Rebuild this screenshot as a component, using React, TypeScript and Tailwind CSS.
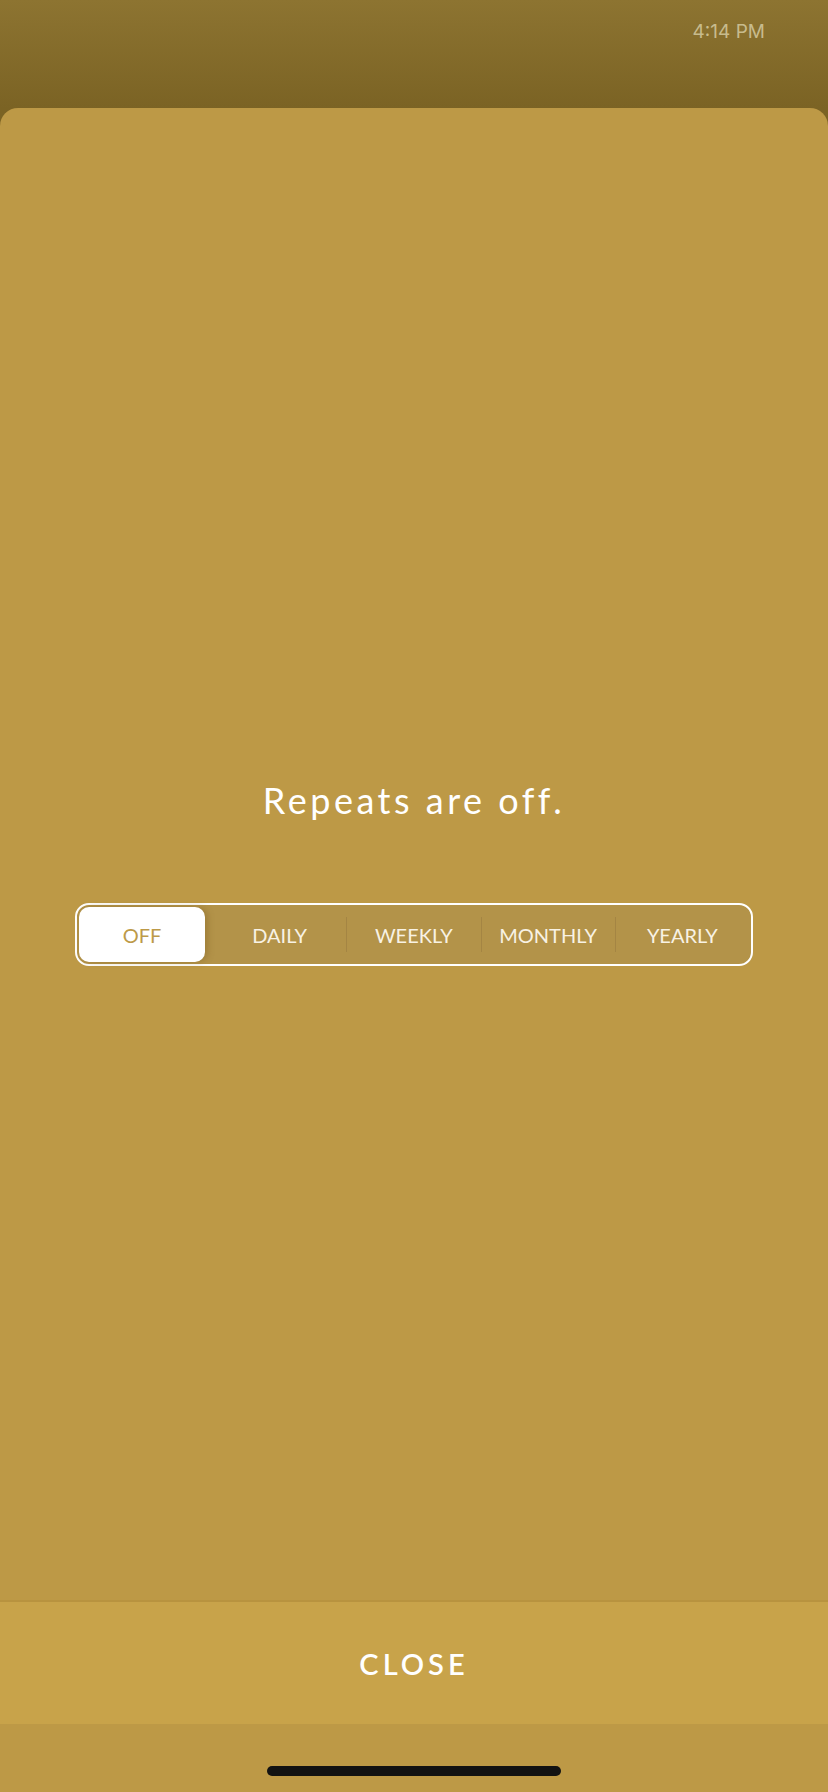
import React from "react";

const options = ["OFF", "DAILY", "WEEKLY", "MONTHLY", "YEARLY"];

export default function App() {
  return (
    <div
      className="w-[828px] h-[1792px] flex flex-col bg-[#7b6324] overflow-hidden"
      style={{ fontFamily: "Lato, 'Open Sans', sans-serif" }}
    >
      {/* status bar */}
      <div className="h-[108px] flex justify-end pr-[63px] pt-[20px] bg-gradient-to-b from-[#8d7431] to-[#7b6324]">
        <span
          className="text-[19px] leading-[24px] text-[#c7bb8d]"
          style={{ fontFamily: "Inter, 'Liberation Sans', sans-serif" }}
        >
          4:14 PM
        </span>
      </div>

      {/* sheet */}
      <div className="flex-1 flex flex-col bg-[#bd9946] rounded-t-[18px]">
        <div className="flex-1 flex flex-col items-center pt-[671px]">
          <h1 className="text-[36px] leading-[42px] tracking-[3.5px] text-white font-normal">
            Repeats are off.
          </h1>

          <div className="mt-[82px] w-[678px] h-[63px] border-2 border-white rounded-[14px] bg-[#b39349] p-[2px] flex">
            {options.map((o, i) => {
              const selected = i === 0;
              const showDivider = i >= 2;
              return (
                <React.Fragment key={o}>
                  {showDivider && (
                    <div className="w-px h-[35px] self-center bg-[#a48543]" />
                  )}
                  {selected ? (
                    <div className="w-[126px] mr-[8px] rounded-[10px] bg-white flex items-center justify-center shadow-[3px_0_6px_rgba(120,90,30,0.35)]">
                      <span className="text-[20px] font-normal text-[#bd9a48]">
                        {o}
                      </span>
                    </div>
                  ) : (
                    <div className="flex-1 flex items-center justify-center">
                      <span className="text-[20px] font-normal text-[#f8f2e4]">
                        {o}
                      </span>
                    </div>
                  )}
                </React.Fragment>
              );
            })}
          </div>
        </div>

        {/* close band */}
        <div className="h-[124px] border-t-2 border-[#b8933f] bg-[#c8a34a] flex items-center justify-center">
          <span className="text-[29px] font-semibold tracking-[4px] text-white leading-none">
            CLOSE
          </span>
        </div>

        {/* home indicator area */}
        <div className="h-[68px] flex justify-center pt-[42px]">
          <div className="w-[294px] h-[10px] rounded-full bg-[#121212]" />
        </div>
      </div>
    </div>
  );
}
